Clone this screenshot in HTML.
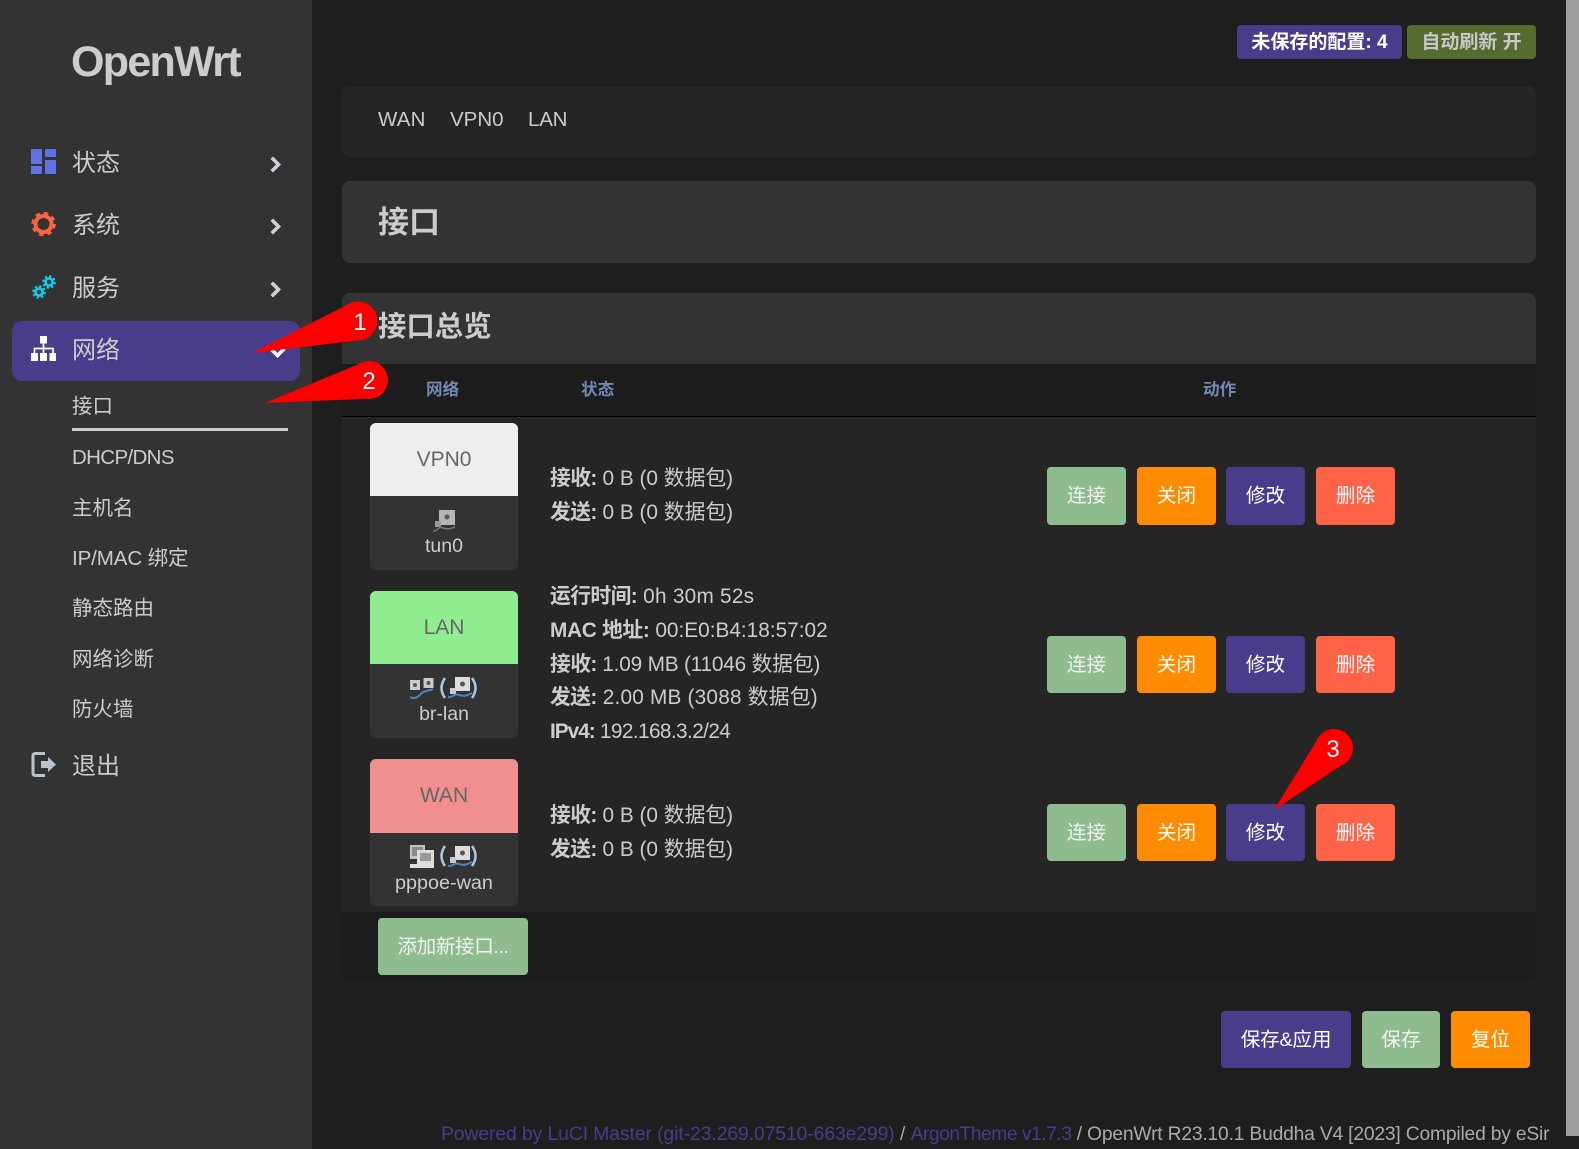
<!DOCTYPE html>
<html lang="zh-CN"><head><meta charset="utf-8"><title>接口</title>
<style>
html,body{margin:0;padding:0;width:1579px;height:1149px;overflow:hidden;background:#1e1e1e}
body{position:relative;font-family:"Liberation Sans","Noto Sans CJK SC",sans-serif;color:#ccc}
.a{position:absolute}
.t{position:absolute;white-space:nowrap;line-height:34px;height:34px}
.m{position:absolute;left:72px;font-size:24px;line-height:34px;color:#ccc;white-space:nowrap}
.s{position:absolute;left:72px;font-size:20.5px;line-height:30px;color:#ccc;white-space:nowrap}
.l{position:absolute;left:550px;font-size:20.8px;line-height:34px;color:#ccc;white-space:nowrap;letter-spacing:0}
.l b{font-weight:700;letter-spacing:-.6px}
.b{position:absolute;width:79px;height:57px;border-radius:4px;color:#fff;font-size:19.6px;line-height:59px;text-align:center;white-space:nowrap}
.g{background:#8fbc8f;color:#f2f2f2}.o{background:#ff8c00}.p{background:#483d8b}.r{background:#ff6347}
.ifc{position:absolute;left:370px;width:148px;height:147px;border-radius:6px;overflow:hidden;background:#333}
.ifc .h{height:73px;line-height:73px;text-align:center;font-size:21px;color:#666}
.ifc .n{position:absolute;left:0;width:148px;top:108px;line-height:30px;text-align:center;font-size:19.5px;color:#ccc}
.th{position:absolute;top:377px;font-size:16.6px;font-weight:700;line-height:26px;color:#7289b5}
</style></head><body>

<!-- scrollbar -->
<div class="a" style="left:1566px;top:0;width:13px;height:1136px;background:#9e9e9e"></div>

<!-- sidebar -->
<div class="a" style="left:0;top:0;width:312px;height:1149px;background:#333"></div>
<div class="a" style="left:71px;top:34px;font-size:43px;font-weight:700;line-height:56px;color:#ccc;letter-spacing:-1.7px;white-space:nowrap">OpenWrt</div>
<div class="a" style="left:12px;top:321px;width:288px;height:60px;background:#483d8b;border-radius:10px"></div>

<svg class="a" style="left:0;top:0" width="312" height="800" viewBox="0 0 312 800">
  <g fill="#5e72e4"><rect x="31" y="149" width="11" height="15"/><rect x="31" y="166" width="11" height="8"/><rect x="45" y="149" width="11" height="8"/><rect x="45" y="160" width="11" height="14"/></g>
  <g fill="none" stroke="#fb6340"><circle cx="43.500" cy="224" r="8" stroke-width="4"/><circle cx="43.500" cy="224" r="10.500" stroke-width="3.500" stroke-dasharray="4.200 4.050"/></g>
  <g fill="none" stroke="#11cdef"><circle cx="39" cy="292" r="3.600" stroke-width="2.600"/><circle cx="39" cy="292" r="5.800" stroke-width="2" stroke-dasharray="2.300 2.250"/><circle cx="49" cy="282" r="3.600" stroke-width="2.600"/><circle cx="49" cy="282" r="5.800" stroke-width="2" stroke-dasharray="2.300 2.250"/></g>
  <g fill="#fff"><rect x="40" y="336" width="7" height="7.500"/><rect x="31" y="353" width="7" height="8"/><rect x="40" y="353" width="7" height="8"/><rect x="49.500" y="353" width="6.500" height="8"/></g>
  <path d="M43.500 343V353M34.500 353V348.500H53V353" fill="none" stroke="#fff" stroke-width="1.700"/>
  <g fill="none" stroke="#ccd1d9" stroke-width="3.600" stroke-linecap="square"><path d="M273 159l5.500 5.500-5.500 5.500"/><path d="M273 221l5.500 5.500-5.500 5.500"/><path d="M273 284l5.500 5.500-5.500 5.500"/></g>
  <path d="M272 350l5.500 5.500 5.500-5.500" fill="none" stroke="#fff" stroke-width="3.600" stroke-linecap="square"/>
  <path d="M45 753.500H35.500Q33 753.500 33 756V773Q33 775.500 35.500 775.500H45" fill="none" stroke="#b9c3cc" stroke-width="3"/>
  <path d="M41 761H48V757L56 764.500L48 772V768H41Z" fill="#b9c3cc"/>
</svg>

<div class="m" style="top:147px">状态</div>
<div class="m" style="top:209px">系统</div>
<div class="m" style="top:272px">服务</div>
<div class="m" style="top:334px">网络</div>
<div class="s" style="top:392px">接口</div>
<div class="a" style="left:72px;top:428px;width:216px;height:3px;background:#ccc"></div>
<div class="s" style="top:443px;letter-spacing:-.65px">DHCP/DNS</div>
<div class="s" style="top:494px">主机名</div>
<div class="s" style="top:544px;letter-spacing:-.1px">IP/MAC 绑定</div>
<div class="s" style="top:594px">静态路由</div>
<div class="s" style="top:645px">网络诊断</div>
<div class="s" style="top:695px">防火墙</div>
<div class="m" style="top:750px">退出</div>

<!-- top badges -->
<div class="a" style="left:1237px;top:25px;width:165px;height:34px;border-radius:4px;background:#483d8b;color:#fff;font-size:19px;font-weight:700;line-height:36px;text-align:center;white-space:nowrap">未保存的配置: 4</div>
<div class="a" style="left:1407px;top:25px;width:129px;height:34px;border-radius:4px;background:#556b2f;color:#c8c8c8;font-size:19px;font-weight:700;line-height:36px;text-align:center;white-space:nowrap">自动刷新 开</div>

<!-- tabs -->
<div class="a" style="left:342px;top:86px;width:1194px;height:71px;background:#252525;border-radius:8px"></div>
<div class="t" style="left:378px;top:103px;font-size:20.500px;letter-spacing:.2px">WAN</div>
<div class="t" style="left:450px;top:103px;font-size:20.500px">VPN0</div>
<div class="t" style="left:528px;top:103px;font-size:20.500px;letter-spacing:-.2px">LAN</div>

<!-- title -->
<div class="a" style="left:342px;top:181px;width:1194px;height:82px;background:#333;border-radius:8px"></div>
<div class="a" style="left:378px;top:202px;font-size:31px;font-weight:700;line-height:42px;color:#ccc">接口</div>

<!-- section -->
<div class="a" style="left:342px;top:293px;width:1194px;height:688px;background:#1c1c1c;border-radius:8px;overflow:hidden">
  <div class="a" style="left:0;top:0;width:1194px;height:71px;background:#333"></div>
  <div class="a" style="left:0;top:71px;width:1194px;height:52px;background:#1c1c1c;border-bottom:1px solid #000"></div>
  <div class="a" style="left:0;top:124px;width:1194px;height:495px;background:#252525"></div>
</div>
<div class="a" style="left:378px;top:308px;font-size:28.400px;font-weight:700;line-height:38px;color:#ccc;white-space:nowrap">接口总览</div>
<div class="th" style="left:426px">网络</div>
<div class="th" style="left:581px">状态</div>
<div class="th" style="left:1203px">动作</div>

<!-- interfaces -->
<div class="ifc" style="top:423px"><div class="h" style="background:#eee">VPN0</div><div class="n">tun0</div></div>
<div class="ifc" style="top:591px"><div class="h" style="background:#90ee90">LAN</div><div class="n">br-lan</div></div>
<div class="ifc" style="top:759px"><div class="h" style="background:#f08f8f;height:74px;line-height:74px">WAN</div><div class="n" style="top:109px;font-size:19.800px">pppoe-wan</div></div>

<svg class="a" style="left:400px;top:500px" width="100" height="380" viewBox="400 500 100 380">
  <defs>
    <g id="port"><rect x="7" y="0" width="15" height="14" fill="#dcdcdc"/><circle cx="14.500" cy="7" r="2.500" fill="#555"/><rect x="2" y="11" width="6" height="6" fill="#ccc"/><path d="M0 20C6 21 5 16 11 18S19 18 24 16" fill="none" stroke="#4f83c4" stroke-width="2"/></g>
    <g id="port2"><rect x="0" y="0" width="10" height="10" fill="#ccc"/><circle cx="5" cy="5" r="2" fill="#555"/></g>
  </defs>
  <g transform="translate(433 510)"><rect x="6" y="0" width="16" height="15" fill="#b5b5b5"/><circle cx="14" cy="7" r="2.500" fill="#555"/><rect x="2" y="11" width="6" height="6" fill="#999"/><path d="M0 21C6 21 4 16 10 18S18 18 22 17" fill="none" stroke="#777" stroke-width="1.500"/></g>
  <g transform="translate(410 680)"><use href="#port2"/><use href="#port2" x="13.500" y="-2"/><path d="M0 17C5 20 9 16 12 13S20 11 23 9" fill="none" stroke="#4f83c4" stroke-width="2"/></g>
  <path d="M445 678Q438 688 445 698M472 678Q479 688 472 698" fill="none" stroke="#a8c4e2" stroke-width="2.600"/>
  <use href="#port" transform="translate(448 677)"/>
  <g transform="translate(410 845)"><rect x="0" y="0" width="15" height="14" fill="#c4c4c4"/><rect x="2" y="2" width="11" height="9" fill="#8a8a8a"/><rect x="7" y="5" width="17" height="15" fill="#dcdcdc"/><rect x="10" y="8" width="11" height="8" fill="#999"/><rect x="0" y="19" width="24" height="4" fill="#ddd"/></g>
  <path d="M445 846Q438 856 445 866M472 846Q479 856 472 866" fill="none" stroke="#a8c4e2" stroke-width="2.600"/>
  <use href="#port" transform="translate(448 846)"/>
</svg>

<!-- status -->
<div class="l" style="top:462px"><b>接收:</b> 0 B (0 数据包)</div>
<div class="l" style="top:496px"><b>发送:</b> 0 B (0 数据包)</div>
<div class="l" style="top:580px;letter-spacing:.25px"><b>运行时间:</b> 0h 30m 52s</div>
<div class="l" style="top:614px"><b style="letter-spacing:-.3px">MAC 地址:</b> 00:E0:B4:18:57:02</div>
<div class="l" style="top:648px;letter-spacing:-.2px"><b>接收:</b> 1.09 MB (11046 数据包)</div>
<div class="l" style="top:681px;letter-spacing:.2px"><b>发送:</b> 2.00 MB (3088 数据包)</div>
<div class="l" style="top:715px;letter-spacing:-.6px"><b style="letter-spacing:-1px">IPv4:</b> 192.168.3.2/24</div>
<div class="l" style="top:799px"><b>接收:</b> 0 B (0 数据包)</div>
<div class="l" style="top:833px"><b>发送:</b> 0 B (0 数据包)</div>

<!-- buttons -->
<div class="b g" style="left:1047px;top:467px;height:58px">连接</div><div class="b o" style="left:1137px;top:467px;height:58px">关闭</div><div class="b p" style="left:1226px;top:467px;height:58px">修改</div><div class="b r" style="left:1316px;top:467px;height:58px">删除</div>
<div class="b g" style="left:1047px;top:636px">连接</div><div class="b o" style="left:1137px;top:636px">关闭</div><div class="b p" style="left:1226px;top:636px">修改</div><div class="b r" style="left:1316px;top:636px">删除</div>
<div class="b g" style="left:1047px;top:804px">连接</div><div class="b o" style="left:1137px;top:804px">关闭</div><div class="b p" style="left:1226px;top:804px">修改</div><div class="b r" style="left:1316px;top:804px">删除</div>

<div class="b g" style="left:378px;top:918px;width:150px;letter-spacing:-.4px">添加新接口...</div>
<div class="b p" style="left:1221px;top:1011px;width:130px;letter-spacing:-.2px">保存&amp;应用</div>
<div class="b g" style="left:1362px;top:1011px;width:78px">保存</div>
<div class="b o" style="left:1451px;top:1011px">复位</div>

<!-- footer -->
<div class="a" style="left:441px;top:1121px;font-size:19.300px;line-height:28px;color:#aaa;white-space:nowrap;letter-spacing:-.06px"><span style="color:#483d8b">Powered by LuCI Master (git-23.269.07510-663e299)</span> / <span style="color:#483d8b;letter-spacing:-.5px">ArgonTheme v1.7.3</span> <span style="letter-spacing:-.2px">/ OpenWrt R23.10.1 Buddha V4 [2023] Compiled by eSir</span></div>

<!-- annotations -->
<svg class="a" style="left:0;top:0" width="1579" height="1149" viewBox="0 0 1579 1149">
  <g fill="#f00">
    <circle cx="358" cy="321" r="19.500"/><path d="M252 353L352.400 302.300L363.600 339.700Z"/>
    <circle cx="369" cy="380" r="19"/><path d="M265 403L365 361.500L373 398.500Z"/>
    <circle cx="1334" cy="748" r="19"/><path d="M1274 810L1320.300 734.800L1347.700 761.200Z"/>
  </g>
  <g fill="#fff" font-family="'Liberation Sans',sans-serif" font-size="24" text-anchor="middle">
    <text x="360" y="330">1</text><text x="369" y="389">2</text><text x="1333" y="757">3</text>
  </g>
</svg>
</body></html>
